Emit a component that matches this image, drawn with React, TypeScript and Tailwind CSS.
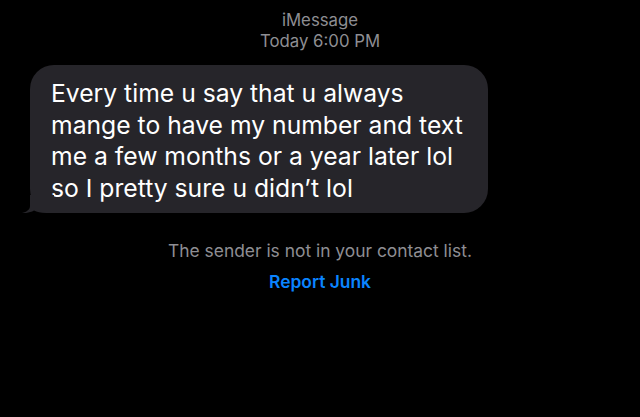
export default function App() {
  return (
    <div className="w-[640px] h-[417px] bg-black overflow-hidden font-['Inter',sans-serif]">
      {/* Header */}
      <div className="pt-[10px] flex flex-col items-center text-[#8e8e93] text-[16.8px] leading-[21px]">
        <span>iMessage</span>
        <span>Today 6:00 PM</span>
      </div>

      {/* Incoming bubble */}
      <div className="mt-[13px] pl-[30px]">
        <div className="relative w-[458px] h-[148px] bg-[#26252a] rounded-[24px] pl-[21px] pt-[13px]">
          <p className="text-white text-[24.7px] leading-[31.5px] whitespace-nowrap">
            Every time u say that u always
            <br />
            mange to have my number and text
            <br />
            me a few months or a year later lol
            <br />
            so I pretty sure u didn’t lol
          </p>
          <svg className="absolute left-[-9px] bottom-0" width="33" height="18" viewBox="0 0 33 18">
            <path
              d="M9 0 L9 11 C9 14.5 6 16.8 1 18 C5 18.4 9.5 17.6 13 15.6 C16 17.2 19.5 18 25 18 L33 18 L33 0 Z"
              fill="#26252a"
            />
          </svg>
        </div>
      </div>

      {/* Unknown sender notice */}
      <div className="mt-[25px] flex flex-col items-center text-[17.4px]">
        <span className="text-[#8e8e93] leading-[26px]">The sender is not in your contact list.</span>
        <button className="mt-[5px] text-[#0a84ff] font-semibold leading-[26px]">Report Junk</button>
      </div>
    </div>
  )
}
